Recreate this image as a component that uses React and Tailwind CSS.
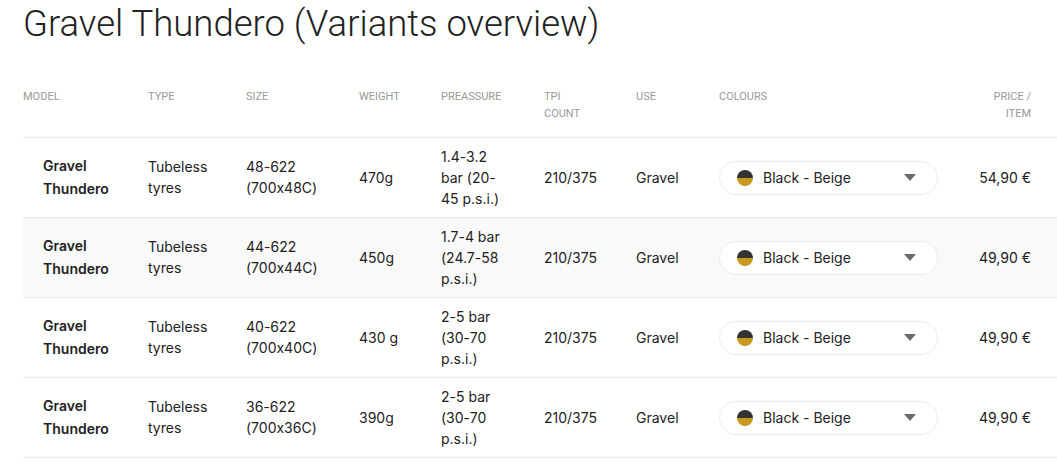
const rows = [
    { size: ['48-622', '(700x48C)'], weight: '470g', pressure: ['1.4-3.2', 'bar (20-', '45 p.s.i.)'], price: '54,90 €' },
    { size: ['44-622', '(700x44C)'], weight: '450g', pressure: ['1.7-4 bar', '(24.7-58', 'p.s.i.)'], price: '49,90 €' },
    { size: ['40-622', '(700x40C)'], weight: '430 g', pressure: ['2-5 bar', '(30-70', 'p.s.i.)'], price: '49,90 €' },
    { size: ['36-622', '(700x36C)'], weight: '390g', pressure: ['2-5 bar', '(30-70', 'p.s.i.)'], price: '49,90 €' },
]

const cols = 'grid grid-cols-[125px_98px_113px_82px_103px_92px_83px_220px_1fr]'

function Lines({ items }) {
    return (
        <div>
            {items.map((t) => (
                <div key={t}>{t}</div>
            ))}
        </div>
    )
}

function ColourSelect() {
    return (
        <div className="flex items-center w-[219px] h-[34px] rounded-full border border-[#ececec] bg-white pl-[17px] pr-[21px]">
            {/* swatch: dark top, gold bottom */}
            <span className="w-4 h-4 rounded-full overflow-hidden flex flex-col shrink-0">
                <span className="h-1/2 bg-[#333333]" />
                <span className="h-1/2 bg-[#c9981f]" />
            </span>
            <span className="ml-[10px] text-[14px] text-[#222]">Black - Beige</span>
            <svg className="ml-auto" width="12" height="7" viewBox="0 0 12 7">
                <path d="M0 0 L12 0 L6 7 Z" fill="#6b6b6b" />
            </svg>
        </div>
    )
}

export default function App() {
    return (
        <div className="w-[1057px] h-[465px] overflow-hidden bg-white pl-[23px] font-['Inter',sans-serif] [font-feature-settings:'calt'_0]">
            <h1 className="font-['Roboto',sans-serif] font-light text-[36.5px] leading-[46px] text-[#222] pt-[1px]">
                Gravel Thundero (Variants overview)
            </h1>

            <div className="w-[1060px] mt-[41px]">
                <div className={`${cols} h-[50px] border-b border-[#ececec] font-['Roboto',sans-serif] text-[11px] leading-[17px] text-[#9a9a9a] uppercase`}>
                    <div>Model</div>
                    <div>Type</div>
                    <div>Size</div>
                    <div>Weight</div>
                    <div>Preassure</div>
                    <div>TPI<br />Count</div>
                    <div>Use</div>
                    <div>Colours</div>
                    <div className="text-right pr-[52px]">Price /<br />Item</div>
                </div>

                {rows.map((r, i) => (
                    <div
                        key={i}
                        className={`${cols} h-[80px] items-center border-b border-[#ececec] text-[14px] leading-[21px] text-[#222] ${i === 1 ? 'bg-[#f8f9f8]' : ''}`}
                    >
                        <div className="pl-5 font-semibold leading-[23px] -mt-[2px]">
                            <div>Gravel</div>
                            <div>Thundero</div>
                        </div>
                        <div className="-mt-[2px]"><Lines items={['Tubeless', 'tyres']} /></div>
                        <div className="-mt-[2px]"><Lines items={r.size} /></div>
                        <div>{r.weight}</div>
                        <div className="-mt-[1px]"><Lines items={r.pressure} /></div>
                        <div>210/375</div>
                        <div>Gravel</div>
                        <div><ColourSelect /></div>
                        <div className="text-right pr-[52px]">{r.price}</div>
                    </div>
                ))}
            </div>
        </div>
    )
}
